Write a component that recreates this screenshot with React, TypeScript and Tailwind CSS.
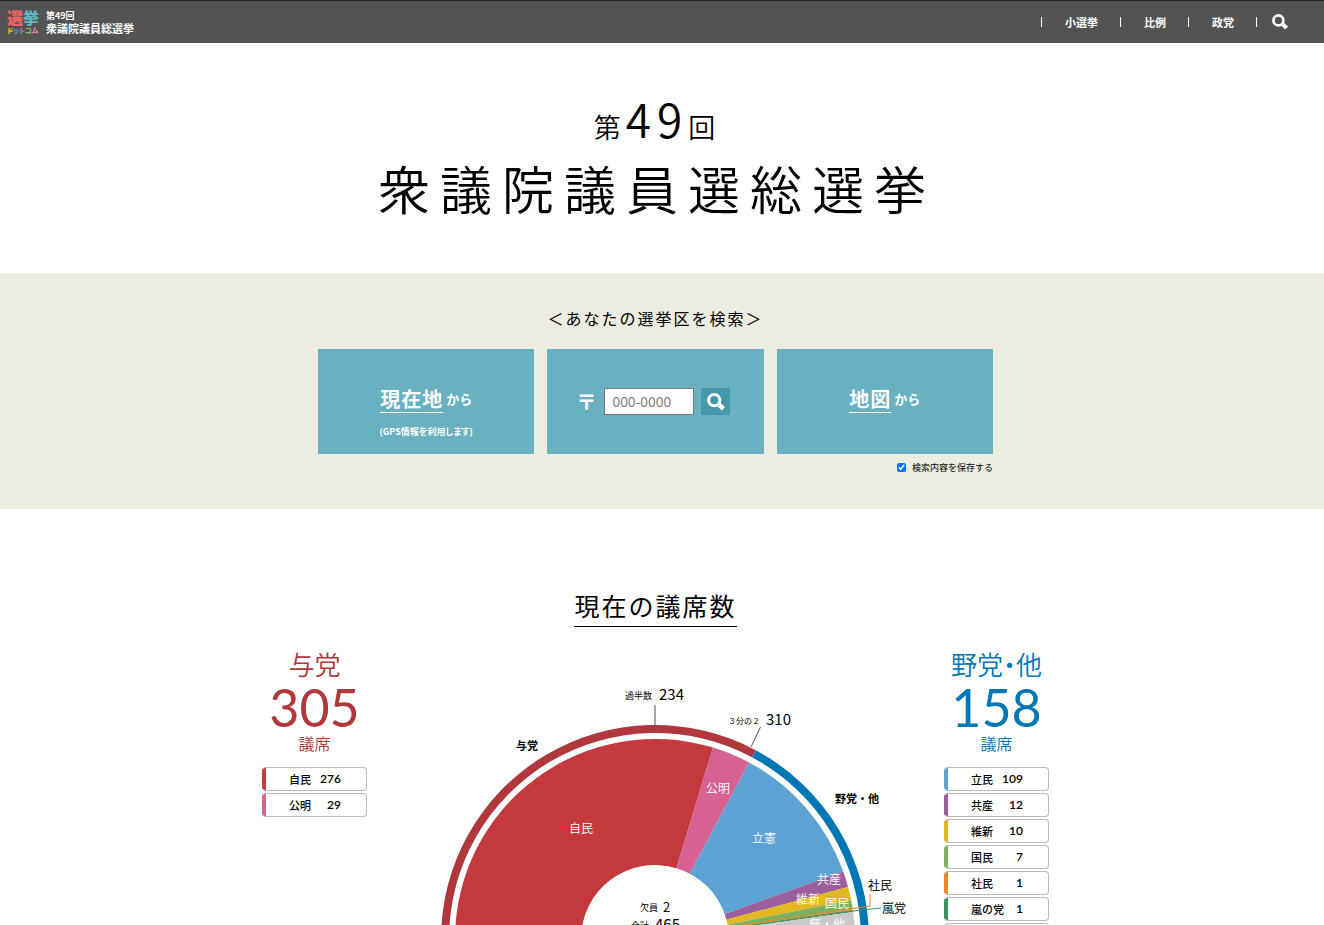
import { FormEvent, useState } from 'react';

type Party = { name: string; seats: number; color: string };

type BlocProps = {
  title: string;
  seats: number;
  textClass: string;
  parties: Party[];
};

const RULING: Party[] = [
  { name: '自民', seats: 276, color: '#c4393b' },
  { name: '公明', seats: 29, color: '#d66294' },
];

const OPPOSITION: Party[] = [
  { name: '立民', seats: 109, color: '#5ca3d3' },
  { name: '共産', seats: 12, color: '#9b609c' },
  { name: '維新', seats: 10, color: '#e3b71f' },
  { name: '国民', seats: 7, color: '#7bb25f' },
  { name: '社民', seats: 1, color: '#ee8428' },
  { name: '嵐の党', seats: 1, color: '#3a9461' },
  { name: '無・他', seats: 18, color: '#c9c9c9' },
];

const TOTAL_SEATS = 465;

const NAV = ['小選挙', '比例', '政党'];

// Chart geometry
const CX = 256;
const CY = 259;

function point(radius: number, seats: number) {
  const angle = Math.PI * (1 - seats / TOTAL_SEATS);
  return `${(CX + radius * Math.cos(angle)).toFixed(2)} ${(CY - radius * Math.sin(angle)).toFixed(2)}`;
}

function ring(outer: number, inner: number, from: number, to: number) {
  return `M${point(outer, from)} A${outer} ${outer} 0 0 1 ${point(outer, to)} L${point(inner, to)} A${inner} ${inner} 0 0 0 ${point(inner, from)} Z`;
}

function SearchIcon({ className }: { className: string }) {
  return (
    <svg viewBox="0 0 18 18" fill="none" stroke="currentColor" className={className} aria-hidden="true">
      <circle cx="7.2" cy="7.2" r="5.6" strokeWidth="3" />
      <path d="M11.2 10.8 L16.4 15.8" strokeWidth="4.6" />
    </svg>
  );
}

function Header() {
  return (
    <header className="flex h-[43px] items-center justify-between border-t border-[#222] bg-[#535353] pl-[7px] pr-9 text-white">
      <a href="#" className="flex items-center gap-[7px] font-bold">
        <span className="flex w-8 flex-col font-black whitespace-nowrap">
          <span className="text-[16px] leading-4">
            <span className="text-[#ef6461]">選</span>
            <span className="text-[#62b2c2]">挙</span>
          </span>
          <span className="text-[7px] leading-[10px] [font-feature-settings:'palt']">
            <span className="text-[#f7c600]">ド</span>
            <span className="text-[#58a5dc]">ッ</span>
            <span className="text-[#b06fc0]">ト</span>
            <span className="text-[#7fc35c]">コ</span>
            <span className="text-[#f07fb4]">ム</span>
          </span>
        </span>
        <span className="flex flex-col">
          <span className="text-[9px] leading-3">第49回</span>
          <span className="text-[11px] leading-3">衆議院議員総選挙</span>
        </span>
      </a>
      <nav className="flex items-center text-[11px] font-bold">
        {NAV.map((item) => (
          <a key={item} href="#" className="flex items-center">
            <span className="h-2.5 w-px bg-white" />
            <span className="pr-[22px] pl-[23px]">{item}</span>
          </a>
        ))}
        <span className="h-2.5 w-px bg-white" />
        <button type="button" aria-label="検索" className="ml-[15px]">
          <SearchIcon className="size-4" />
        </button>
      </nav>
    </header>
  );
}

function SearchSection() {
  const [zip, setZip] = useState('');
  const [save, setSave] = useState(true);

  const handleSubmit = (event: FormEvent<HTMLFormElement>) => {
    event.preventDefault();
  };

  return (
    <section className="bg-[#ecece0] pt-[33px] pr-[13px] pb-[34px]">
      <h2 className="text-center text-[16px] leading-6 tracking-[2px]">＜あなたの選挙区を検索＞</h2>
      <div className="mx-auto mt-[19px] max-w-[675px]">
        <div className="grid grid-cols-3 gap-[13px] text-white">
          <button type="button" className="flex h-[105px] flex-col items-center bg-[#69b0c0] pt-9 font-bold">
            <span className="flex items-center gap-[3px]">
              <span className="border-b border-white text-[20px] leading-[27px] tracking-[1px]">現在地</span>
              <span className="text-[13px]">から</span>
            </span>
            <span className="mt-[11px] text-[9px] leading-4 [font-feature-settings:'palt']">(GPS情報を利用します)</span>
          </button>
          <form onSubmit={handleSubmit} className="flex h-[105px] items-center justify-center bg-[#69b0c0] pr-1">
            <label htmlFor="zip" className="text-[20px] leading-5 font-black">〒</label>
            <input
              id="zip"
              type="text"
              value={zip}
              onChange={(e) => setZip(e.target.value)}
              placeholder="000-0000"
              className="ml-2 h-[27px] w-[90px] border border-[#767676] bg-white px-[7px] pb-0.5 text-[14px] leading-5 font-[350] text-black placeholder:text-[#757575]"
            />
            <button type="submit" aria-label="検索" className="ml-[7px] flex h-[27px] w-[29px] items-center justify-center bg-[#4598ab]">
              <SearchIcon className="size-[18px]" />
            </button>
          </form>
          <button type="button" className="flex h-[105px] flex-col items-center bg-[#69b0c0] pt-9 font-bold">
            <span className="flex items-center gap-[3px]">
              <span className="border-b border-white text-[20px] leading-[27px] tracking-[1px]">地図</span>
              <span className="text-[13px]">から</span>
            </span>
          </button>
        </div>
        <label className="mt-1.5 flex items-center justify-end gap-1.5 text-[9px] leading-[15px]">
          <input type="checkbox" checked={save} onChange={(e) => setSave(e.target.checked)} className="size-[9px]" />
          検索内容を保存する
        </label>
      </div>
    </section>
  );
}

function Bloc({ title, seats, textClass, parties }: BlocProps) {
  return (
    <div className="w-[105px] shrink-0">
      <div className={`flex flex-col items-center whitespace-nowrap ${textClass}`}>
        <h3 className="text-[26px] leading-[30px] font-[350] [font-feature-settings:'palt']">{title}</h3>
        <p className="font-['Lato','Noto_Sans_CJK_JP',sans-serif] text-[52px] leading-14">{seats}</p>
        <p className="text-[16px] leading-4 font-[350]">議席</p>
      </div>
      <ul className="mt-4 flex flex-col gap-0.5 text-[11px] font-medium">
        {parties.map((party) => (
          <li key={party.name} className="flex h-6 overflow-hidden rounded-[4px] border border-l-0 border-[#bbb]">
            <span className="w-1" style={{ backgroundColor: party.color }} />
            <span className="ml-[23px] flex w-[52px] items-center justify-between">
              {party.name}
              <span className="font-['Lato','Noto_Sans_CJK_JP',sans-serif] text-[12px] font-semibold">{party.seats}</span>
            </span>
          </li>
        ))}
      </ul>
    </div>
  );
}

function SeatChart() {
  let count = 0;
  const slices = [...RULING, ...OPPOSITION].map((party) => {
    const from = count;
    count += party.seats;
    return { ...party, from, to: count };
  });

  return (
    <svg viewBox="1 0 512 300" className="mt-[31px] h-[300px] w-[512px] shrink-0" role="img" aria-label="現在の議席数">
      <path d={ring(214, 206, 0, 305)} fill="#b0373c" />
      <path d={ring(214, 206, 305, TOTAL_SEATS)} fill="#0077b5" />
      {slices.map((slice) => (
        <path key={slice.name} d={ring(200, 74, slice.from, slice.to)} fill={slice.color} />
      ))}

      <g fill="none" strokeWidth="1">
        <path d="M256 25V45M361.500 47L352 67" stroke="#555" />
        <path d="M330 247L471 226V214" stroke="#ee8428" />
        <path d="M330 248.500L436 233L482 228" stroke="#3a9461" />
      </g>

      <g className="text-[12px] font-[350]" fill="#fff" textAnchor="middle">
        <text x="182" y="153">自民</text>
        <text x="319" y="113">公明</text>
        <text x="365" y="163">立憲</text>
        <text x="430" y="204">共産</text>
        <text x="409" y="224">維新</text>
        <text x="438" y="228">国民</text>
        <text x="428" y="249">無・他</text>
      </g>

      <g fill="#000">
        <text x="117" y="70" className="text-[11px] font-bold">与党</text>
        <text x="436" y="123" className="text-[11px] font-bold">野党・他</text>
        <text x="469" y="210" className="text-[12px]">社民</text>
        <text x="483" y="233" className="text-[12px]">嵐党</text>
        <text x="226" y="19" className="text-[9px]">過半数</text>
        <text x="260" y="20" className="text-[15px]">234</text>
        <text x="329" y="44" className="text-[8px]">３分の２</text>
        <text x="367" y="45" className="text-[15px]">310</text>
        <text x="241" y="231" className="text-[9px]">欠員</text>
        <text x="264" y="232" className="text-[13px]">2</text>
        <text x="232" y="249" className="text-[9px]">合計</text>
        <text x="256" y="250" className="text-[15px]">465</text>
      </g>
    </svg>
  );
}

export default function App() {
  return (
    <div className="overflow-x-hidden bg-white font-['Noto_Sans_CJK_JP',sans-serif] text-black">
      <Header />
      <main>
        <h1 className="flex flex-col items-center pt-[45px] pr-2.5 pb-[54px] font-[350]">
          <span className="text-[27px] leading-[60px] tracking-[5px]">
            第<span className="text-[46px] tracking-[6px]">49</span>回
          </span>
          <span className="text-[52px] leading-[62px] tracking-[10px]">衆議院議員選総選挙</span>
        </h1>
        <SearchSection />
        <section className="pt-[78px] pr-[13px]">
          <h2 className="mx-auto w-fit border-b border-black pb-0.5 text-[25px] leading-[37px] tracking-[2px]">現在の議席数</h2>
          <div className="mx-auto mt-[22px] flex w-[787px] max-w-full justify-between">
            <Bloc title="与党" seats={305} textClass="text-[#b0373c]" parties={RULING} />
            <SeatChart />
            <Bloc title="野党・他" seats={158} textClass="text-[#0077b5]" parties={OPPOSITION} />
          </div>
        </section>
      </main>
    </div>
  );
}
